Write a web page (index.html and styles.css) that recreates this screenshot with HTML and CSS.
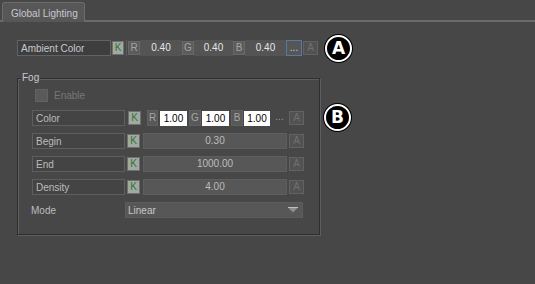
FILE: index.html
```html
<!DOCTYPE html>
<html>
<head>
<meta charset="utf-8">
<link rel="stylesheet" href="styles.css">
</head>
<body>
<div class="tabbar"><div class="tab">Global Lighting</div></div>
<div class="panel">
  <div class="row amb">
    <div class="lbl lbl-dark">Ambient Color</div>
    <div class="k k-amb">K</div>
    <div class="sep"></div>
    <div class="ch w12">R</div><div class="val w42">0.40</div>
    <div class="ch w12">G</div><div class="val w39">0.40</div>
    <div class="ch w12">B</div><div class="val w41">0.40</div>
    <div class="dots dots-sel">...</div>
    <div class="abtn">A</div>
    <div class="callout ca">A</div>
  </div>
  <div class="fogwrap">
    <div class="group">
      <span class="legend">Fog</span>
      <div class="enable"><span class="cb"></span><span class="entext">Enable</span></div>
      <div class="row frow">
        <div class="lbl">Color</div>
        <div class="k k-f">K</div>
        <div class="ch ch-f cr">R</div><div class="wval wv1">1.00</div>
        <div class="ch ch-f cg">G</div><div class="wval wv2">1.00</div>
        <div class="ch ch-f cb2">B</div><div class="wval wv3">1.00</div>
        <div class="dots dots-f">...</div>
        <div class="abtn abtn-f">A</div>
      </div>
      <div class="row frow">
        <div class="lbl">Begin</div>
        <div class="k k-g">K</div>
        <div class="num">0.30</div>
        <div class="abtn abtn-g">A</div>
      </div>
      <div class="row frow">
        <div class="lbl">End</div>
        <div class="k k-g">K</div>
        <div class="num">1000.00</div>
        <div class="abtn abtn-g">A</div>
      </div>
      <div class="row frow">
        <div class="lbl">Density</div>
        <div class="k k-g">K</div>
        <div class="num">4.00</div>
        <div class="abtn abtn-g">A</div>
      </div>
      <div class="row moderow">
        <div class="modelbl">Mode</div>
        <div class="select"><span>Linear</span>
          <svg class="arrow" width="10" height="6" viewBox="0 0 10 6"><path d="M0 0.5 H10 L5 5.5 Z" fill="#8e8e8e"/><path d="M0 0.5 H10" stroke="#c0c0c0" stroke-width="1"/></svg>
        </div>
      </div>
    </div>
    <div class="callout cbb">B</div>
  </div>
</div>
</body>
</html>
```
FILE: styles.css
```css
html, body {
  margin: 0;
  padding: 0;
}
body {
  width: 535px;
  height: 284px;
  background: #474747;
  font-family: "Liberation Sans", Arial, sans-serif;
  font-size: 10px;
  color: #c6c6c6;
  overflow: hidden;
}
.tabbar {
  height: 22px;
  padding: 4px 0 0 2px;
  box-sizing: border-box;
  border-bottom: 2px solid #6a6a6a;
  display: flex;
  align-items: flex-end;
}
.tab {
  width: 83px;
  height: 20px;
  box-sizing: border-box;
  margin-bottom: -2px;
  background: #575757;
  border: 1px solid #6c6c6c;
  border-bottom: none;
  border-radius: 3px 3px 0 0;
  color: #c8c8d0;
  padding: 5px 0 0 8px;
  white-space: nowrap;
}
.panel {
  padding: 18px 0 0 17px;
}
.row {
  display: flex;
  align-items: center;
  height: 16px;
}
.lbl {
  width: 93px;
  height: 16px;
  box-sizing: border-box;
  border: 1px solid #5e5e5e;
  background: #444444;
  padding: 2px 0 0 3px;
  color: #bcbcbc;
  white-space: nowrap;
}
.lbl-dark {
  width: 94px;
  background: #3e3e3e;
  color: #c8c8d0;
  border-color: #626262;
}
.k {
  width: 13px;
  height: 14px;
  box-sizing: border-box;
  background: #a4a8a4;
  border: 1px solid #6e706e;
  color: #2a7a2a;
  font-size: 10px;
  text-align: center;
  line-height: 12px;
}
.k-amb { margin-left: 1px; width: 12px; }
.k-f { margin-left: 3px; }
.k-g { margin-left: 2px; }
.sep {
  width: 1px;
  height: 16px;
  background: #5c5c5c;
  margin: 0 1px 0 2px;
}
.ch {
  height: 14px;
  box-sizing: border-box;
  background: #5c5c5c;
  border: 1px solid #686868;
  color: #a4a4a4;
  text-align: center;
  line-height: 12px;
}
.w12 { width: 12px; }
.val {
  height: 16px;
  background: #545454;
  color: #e6e6e6;
  text-align: center;
  line-height: 16px;
  box-sizing: border-box;
}
.w42 { width: 42px; }
.w39 { width: 39px; }
.w41 { width: 41px; }
.dots {
  height: 16px;
  box-sizing: border-box;
  text-align: center;
  line-height: 13px;
}
.dots-sel {
  width: 16px;
  border: 1px solid #5a78a4;
  background: #565656;
  color: #d0d0d0;
}
.abtn {
  width: 15px;
  height: 14px;
  box-sizing: border-box;
  border: 1px solid #626262;
  background: #525252;
  color: #707070;
  text-align: center;
  line-height: 12px;
  margin-left: 1px;
}
.callout {
  width: 23px;
  height: 23px;
  border-radius: 50%;
  background: #000;
  border: 2px solid #fff;
  box-shadow: 0 0 0 1px #000;
  color: #fff;
  font-family: "DejaVu Sans", sans-serif;
  font-weight: bold;
  font-size: 17px;
  text-align: center;
  line-height: 23px;
  flex: none;
}
.ca { margin-left: 7px; }
.fogwrap {
  display: flex;
  align-items: flex-start;
  margin-top: 22px;
}
.group {
  position: relative;
  width: 303px;
  height: 157px;
  box-sizing: border-box;
  border: 1px solid #2e2e2e;
  box-shadow: 1px 1px 0 #5e5e5e, inset 1px 1px 0 #5e5e5e;
  padding: 10px 0 0 14px;
}
.legend {
  position: absolute;
  left: 3px;
  top: -7px;
  background: #474747;
  padding: 0 1px;
  color: #c8c8d0;
  line-height: 12px;
}
.enable {
  display: flex;
  align-items: center;
  height: 13px;
  margin-left: 3px;
  margin-bottom: 8px;
}
.cb {
  width: 13px;
  height: 13px;
  box-sizing: border-box;
  background: #5a5a5a;
  border: 1px solid #626262;
}
.entext {
  margin-left: 6px;
  color: #777777;
}
.frow { margin-bottom: 7px; }
.ch-f { width: 11px; height: 16px; line-height: 14px; background: #585858; border-color: #606060; }
.cr { margin-left: 6px; }
.cg { margin-left: 2px; width: 12px; }
.cb2 { margin-left: 2px; width: 12px; }
.wval {
  height: 15px;
  background: #ffffff;
  color: #000;
  line-height: 15px;
  text-align: center;
  margin-left: 2px;
}
.wv1 { width: 27px; }
.wv2 { width: 27px; margin-left: 1px; }
.wv3 { width: 26px; margin-left: 1px; }
.dots-f {
  width: 13px;
  margin-left: 3px;
  color: #9a9a9a;
  line-height: 14px;
}
.abtn-f { margin-left: 3px; }
.num {
  width: 144px;
  height: 16px;
  margin-left: 3px;
  box-sizing: border-box;
  background: #575757;
  border: 1px solid #5e5e5e;
  color: #bcbcbc;
  text-align: center;
  line-height: 14px;
}
.abtn-g { margin-left: 2px; }
.moderow { margin-top: 0; }
.modelbl {
  width: 94px;
  margin-left: -1px;
  color: #bcbcbc;
}
.select {
  width: 178px;
  height: 16px;
  box-sizing: border-box;
  background: #575757;
  border: 1px solid #5c5c5c;
  display: flex;
  align-items: center;
  justify-content: space-between;
  padding: 0 4px 0 2px;
  color: #c8c8c8;
}
.arrow { display: block; }
.cbb { margin-left: 4px; margin-top: 26px; }
```
